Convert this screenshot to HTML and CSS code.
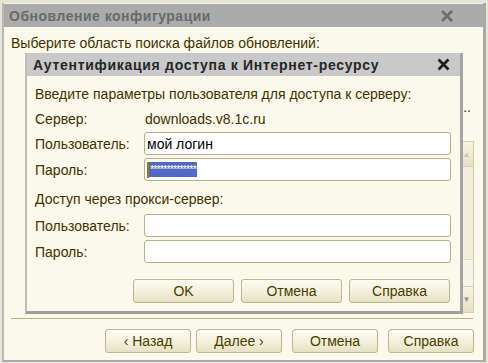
FILE: index.html
```html
<!DOCTYPE html>
<html lang="ru">
<head>
    <meta charset="UTF-8">
    <title>Обновление конфигурации</title>
    <link rel="stylesheet" href="styles.css">
</head>
<body>
    <div class="window">
        <div class="titlebar">
            <span class="title">Обновление конфигурации</span>
            <svg class="close" width="12" height="12" viewBox="0 0 12 12">
                <path d="M1 1 L11 11 M11 1 L1 11" stroke="#6c6c6c" stroke-width="2.6"/>
            </svg>
        </div>
        <div class="content">
            <div class="prompt">Выберите область поиска файлов обновлений:</div>
            <div class="option">..</div>
            <div class="list">
                <div class="scrollbar">
                    <div class="sb-btn up">&#9650;</div>
                    <div class="sb-thumb"></div>
                    <div class="sb-track"></div>
                    <div class="sb-btn down">&#9660;</div>
                </div>
            </div>
            <div class="separator"></div>
            <div class="buttons">
                <button class="btn">&lsaquo; Назад</button>
                <button class="btn next">Далее &rsaquo;</button>
                <button class="btn">Отмена</button>
                <button class="btn">Справка</button>
            </div>
        </div>

        <div class="dialog">
            <div class="dialog-title">
                <span class="title">Аутентификация доступа к Интернет-ресурсу</span>
                <svg class="close" width="13" height="13" viewBox="0 0 13 13">
                    <path d="M1.5 1.5 L11.5 11.5 M11.5 1.5 L1.5 11.5" stroke="#1e1e1e" stroke-width="2.8"/>
                </svg>
            </div>
            <div class="dialog-body">
                <div class="hint">Введите параметры пользователя для доступа к серверу:</div>
                <div class="row server">
                    <span class="label">Сервер:</span>
                    <span class="value">downloads.v8.1c.ru</span>
                </div>
                <div class="row">
                    <span class="label">Пользователь:</span>
                    <div class="field">мой логин</div>
                </div>
                <div class="row">
                    <span class="label">Пароль:</span>
                    <div class="field"><span class="caret"></span><span class="selected">**************</span></div>
                </div>
                <div class="hint proxy">Доступ через прокси-сервер:</div>
                <div class="row">
                    <span class="label">Пользователь:</span>
                    <div class="field"></div>
                </div>
                <div class="row">
                    <span class="label">Пароль:</span>
                    <div class="field"></div>
                </div>
                <div class="dialog-buttons">
                    <button class="btn wide">OK</button>
                    <button class="btn wide">Отмена</button>
                    <button class="btn wide">Справка</button>
                </div>
            </div>
        </div>
    </div>
</body>
</html>
```

FILE: styles.css
```css
body {
    margin: 0;
    width: 488px;
    height: 363px;
    background-color: #e8e5d4;
    font-family: "Liberation Sans", Arial, sans-serif;
    font-size: 14px;
    color: #3e3200;
    overflow: hidden;
}

.window {
    position: relative;
    margin: 3px 0 0 2px;
    width: 484px;
    height: 359px;
    box-sizing: border-box;
    background-color: #fbf9eb;
    border-left: 2px solid #b9b9b9;
    border-right: 3px solid #a9a9a9;
    border-bottom: 2px solid #ababab;
}

.titlebar {
    height: 24px;
    box-sizing: border-box;
    background-color: #ababab;
    border-top: 1px solid #f2f2f2;
    display: flex;
    align-items: center;
    justify-content: space-between;
    padding: 0 30px 0 5px;
}

.title {
    font-weight: bold;
    font-size: 14px;
    letter-spacing: 0.5px;
    color: #6a6a6a;
}

.content {
    padding: 0 7px;
}

.prompt {
    margin-top: 8px;
    line-height: 16px;
}

.option {
    margin-top: 48px;
    text-align: right;
    padding-right: 5px;
    line-height: 16px;
}

.list {
    margin: 26px 2px 0 16px;
    height: 172px;
    display: flex;
    justify-content: flex-end;
}

.scrollbar {
    width: 13px;
    display: flex;
    flex-direction: column;
    border-left: 1px solid #ddd6b4;
    border-right: 1px solid #d3cca8;
}

.sb-btn {
    height: 24px;
    display: flex;
    align-items: center;
    justify-content: center;
    font-size: 8px;
    color: #c9c6b8;
    background: linear-gradient(#f7f4e4, #e6e0c3);
    border-top: 1px solid #d8d0ab;
    border-bottom: 1px solid #d8d0ab;
}

.sb-btn.down {
    height: 25px;
    color: #8f8f8f;
}

.sb-thumb {
    height: 92px;
    background-color: #f2eedb;
}

.sb-track {
    flex: 1;
    background-color: #f7f5ea;
    border-top: 1px solid #e0d9bb;
}

.separator {
    margin: 5px 3px 0 0;
    height: 1px;
    background-color: #b8b08c;
}

.buttons {
    margin-top: 10px;
    display: flex;
    justify-content: flex-end;
    gap: 10px;
    padding-right: 2px;
}

.btn {
    width: 86px;
    height: 24px;
    padding: 0;
    font-family: "Liberation Sans", Arial, sans-serif;
    font-size: 14px;
    font-weight: normal;
    color: #4a3d00;
    background: linear-gradient(#fdfcf4, #efebd3 70%, #e6e1c4);
    border: 1px solid #beb68f;
    border-radius: 3px;
}

.buttons .next {
    margin-left: -5px;
}

.dialog {
    position: absolute;
    left: 21px;
    top: 50px;
    width: 438px;
    height: 261px;
    box-sizing: border-box;
    background-color: #fbf9eb;
    border-left: 2px solid #bdbdbd;
    border-right: 3px solid #a4a4a4;
    border-bottom: 3px solid #9c9c9c;
    display: flex;
    flex-direction: column;
}

.dialog-title {
    height: 23px;
    flex-shrink: 0;
    background-color: #c9c9c9;
    display: flex;
    align-items: center;
    justify-content: space-between;
    padding: 0 10px 0 6px;
}

.dialog-title .title {
    color: #262626;
    letter-spacing: 0.7px;
}

.dialog-body {
    padding: 0 9px 0 8px;
    display: flex;
    flex-direction: column;
}

.hint {
    margin-top: 10px;
    line-height: 16px;
}

.row {
    display: flex;
    align-items: center;
    margin-top: 3px;
}

.row.server {
    margin-top: 7px;
    height: 20px;
}

.label {
    width: 109px;
    flex-shrink: 0;
}

.value {
    padding-left: 1px;
}

.field {
    flex: 1;
    height: 23px;
    box-sizing: border-box;
    background-color: #fff;
    border: 1px solid #b7af88;
    border-radius: 3px;
    display: flex;
    align-items: center;
    padding-left: 2px;
    color: #000;
}

.caret {
    width: 2px;
    height: 16px;
    background-color: #9a7d10;
}

.selected {
    background-color: #5069c2;
    color: #fff;
    font-size: 11px;
    line-height: 15px;
    padding: 0 1px;
    letter-spacing: -1px;
}

.hint.proxy {
    margin-top: 10px;
    margin-bottom: 4px;
}

.dialog-buttons {
    margin-top: 16px;
    display: flex;
    justify-content: flex-end;
    gap: 7px;
    padding-right: 1px;
}

.btn.wide {
    width: 101px;
}
```
